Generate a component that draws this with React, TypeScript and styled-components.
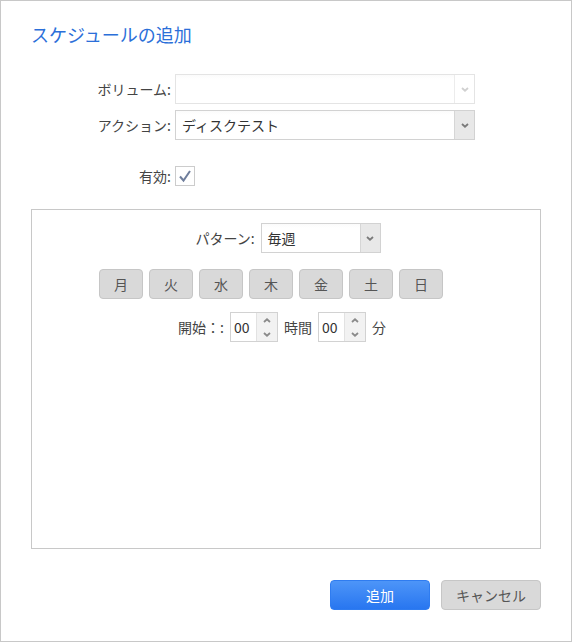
import React from 'react';
import styled, { createGlobalStyle } from 'styled-components';

const GlobalStyle = createGlobalStyle`
      html, body {
            margin: 0;
            padding: 0;
            background: #ffffff;
      }
      body {
            font-family: "Noto Sans CJK JP", "Noto Sans", "Liberation Sans", sans-serif;
            font-size: 14px;
            color: #333333;
      }
`;

const Dialog = styled.div`
      box-sizing: border-box;
      width: 572px;
      height: 642px;
      border: 1px solid #c8c8c8;
      padding: 0 30px 0 30px;
      display: flex;
      flex-direction: column;
`;

const Title = styled.h1`
      margin: 21px 0 0 0;
      font-size: 18px;
      font-weight: normal;
      line-height: 24px;
      color: #2b6fd9;
`;

const Form = styled.div`
      display: grid;
      grid-template-columns: 140px 300px;
      column-gap: 4px;
      row-gap: 6px;
      margin-top: 28px;
      align-items: center;
`;

const Label = styled.div<{ spaced?: boolean }>`
      text-align: right;
      line-height: 20px;
      color: #444444;
      margin-top: ${(props) => (props.spaced ? '20px' : '0')};
`;

const SelectBox = styled.div<{ width: number; disabled?: boolean }>`
      box-sizing: border-box;
      width: ${(props) => props.width}px;
      height: 30px;
      display: flex;
      border: 1px solid ${(props) => (props.disabled ? '#e4e4e4' : '#d2d2d2')};
      background: #ffffff;
`;

const SelectValue = styled.div`
      flex: 1;
      padding-left: 6px;
      line-height: 28px;
      font-size: 14px;
      color: #333333;
      background: linear-gradient(#fbfbfb, #ffffff 4px);
`;

const SelectArrow = styled.div<{ disabled?: boolean }>`
      width: 19px;
      display: flex;
      align-items: center;
      justify-content: center;
      border-left: 1px solid ${(props) => (props.disabled ? '#ececec' : '#d6d6d6')};
      background: ${(props) => (props.disabled ? '#ffffff' : '#e8e8e8')};
      color: ${(props) => (props.disabled ? '#d0d0d0' : '#7a7a7a')};
`;

const Chevron = ({ up }: { up?: boolean }) => (
      <svg width="8" height="5" viewBox="0 0 8 5">
            <polyline
                  points={up ? '1,4 4,1.3 7,4' : '1,1 4,3.7 7,1'}
                  fill="none"
                  stroke="currentColor"
                  strokeWidth="1.8"
            />
      </svg>
);

const Select = ({ value, width, disabled }: { value: string; width: number; disabled?: boolean }) => (
      <SelectBox width={width} disabled={disabled}>
            <SelectValue>{value}</SelectValue>
            <SelectArrow disabled={disabled}>
                  <Chevron />
            </SelectArrow>
      </SelectBox>
);

const Check = styled.div<{ spaced?: boolean }>`
      box-sizing: border-box;
      width: 20px;
      height: 20px;
      border: 1px solid #cccccc;
      display: flex;
      align-items: center;
      justify-content: center;
      margin-top: ${(props) => (props.spaced ? '20px' : '0')};
`;

const Panel = styled.div`
      box-sizing: border-box;
      margin-top: 23px;
      width: 510px;
      height: 340px;
      border: 1px solid #c8c8c8;
      display: flex;
      flex-direction: column;
      align-items: center;
      padding-top: 13px;
`;

const Row = styled.div<{ shift?: number; top?: number }>`
      display: flex;
      align-items: center;
      gap: 6px;
      margin-top: ${(props) => props.top || 0}px;
      margin-right: ${(props) => props.shift || 0}px;
`;

const DayButton = styled.div`
      box-sizing: border-box;
      width: 44px;
      height: 30px;
      border: 1px solid #c6c6c6;
      border-radius: 4px;
      background: #d9d9d9;
      color: #555555;
      display: flex;
      align-items: center;
      justify-content: center;
      font-size: 14px;
`;

const Text = styled.span`
      color: #444444;
      line-height: 20px;
`;

const SpinBox = styled.div`
      box-sizing: border-box;
      width: 48px;
      height: 30px;
      border: 1px solid #d2d2d2;
      display: flex;
      background: #ffffff;
`;

const SpinValue = styled.div`
      flex: 1;
      padding-left: 3px;
      line-height: 28px;
      color: #333333;
`;

const SpinButtons = styled.div`
      width: 20px;
      display: flex;
      flex-direction: column;
      border-left: 1px solid #e2e2e2;
      background: #f2f2f2;
      color: #8a8a8a;
`;

const SpinHalf = styled.div`
      flex: 1;
      display: flex;
      align-items: center;
      justify-content: center;
`;

const Spinner = ({ value }: { value: string }) => (
      <SpinBox>
            <SpinValue>{value}</SpinValue>
            <SpinButtons>
                  <SpinHalf>
                        <Chevron up />
                  </SpinHalf>
                  <SpinHalf>
                        <Chevron />
                  </SpinHalf>
            </SpinButtons>
      </SpinBox>
);

const Footer = styled.div`
      display: flex;
      justify-content: flex-end;
      gap: 11px;
      margin-top: 31px;
`;

const Button = styled.div<{ primary?: boolean }>`
      box-sizing: border-box;
      width: 100px;
      height: 30px;
      border-radius: 4px;
      display: flex;
      align-items: center;
      justify-content: center;
      font-size: 14px;
      border: 1px solid ${(props) => (props.primary ? '#2f7cf0' : '#c6c6c6')};
      background: ${(props) => (props.primary ? 'linear-gradient(#4d95f8, #2876f0)' : '#d9d9d9')};
      color: ${(props) => (props.primary ? '#ffffff' : '#555555')};
`;

const days = ['月', '火', '水', '木', '金', '土', '日'];

export default function App() {
      return (
            <>
                  <GlobalStyle />
                  <Dialog>
                        <Title>スケジュールの追加</Title>
                        <Form>
                              <Label>ボリューム:</Label>
                              <Select value="" width={300} disabled />
                              <Label>アクション:</Label>
                              <Select value="ディスクテスト" width={300} />
                              <Label spaced>有効:</Label>
                              <Check spaced>
                                    <svg width="14" height="14" viewBox="0 0 14 14">
                                          <polyline
                                                points="2,7.5 5.5,11.5 12,2"
                                                fill="none"
                                                stroke="#6f7e9c"
                                                strokeWidth="2"
                                          />
                                    </svg>
                              </Check>
                        </Form>
                        <Panel>
                              <Row shift={-4}>
                                    <Text>パターン:</Text>
                                    <Select value="毎週" width={120} />
                              </Row>
                              <Row top={16} shift={30}>
                                    {days.map((d) => (
                                          <DayButton key={d}>{d}</DayButton>
                                    ))}
                              </Row>
                              <Row top={13} shift={8}>
                                    <Text>開始：:</Text>
                                    <Spinner value="00" />
                                    <Text>時間</Text>
                                    <Spinner value="00" />
                                    <Text>分</Text>
                              </Row>
                        </Panel>
                        <Footer>
                              <Button primary>追加</Button>
                              <Button>キャンセル</Button>
                        </Footer>
                  </Dialog>
            </>
      );
}
